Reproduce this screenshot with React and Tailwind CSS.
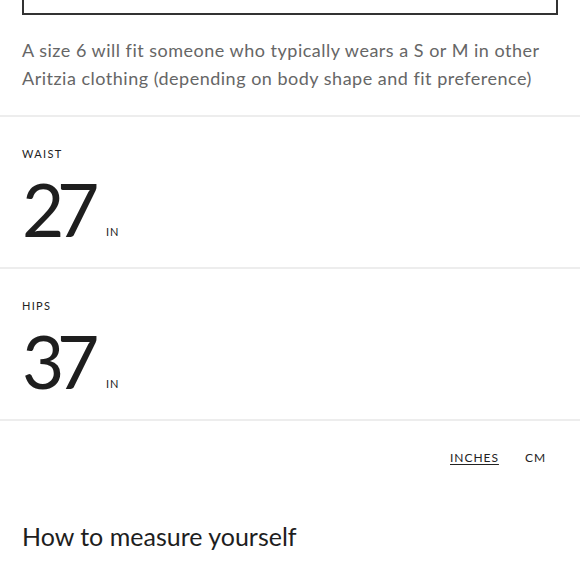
import React from 'react';

const Measurement = ({ label, value }) => (
  <div className="h-[152px] border-t-2 border-[#ededed] px-[22px] pt-[30px]">
    <div className="text-[11px] leading-[14px] tracking-[0.12em] text-[#222]">{label}</div>
    <div className="mt-[18px] flex items-end">
      <span className="text-[73px] leading-[60px] text-[#1e1e1e] tracking-[-0.1em]">{value}</span>
      <span className="ml-[14px] text-[11px] leading-[14px] tracking-[0.08em] text-[#222]">IN</span>
    </div>
  </div>
);

export default function App() {
  return (
    <div className="w-[580px] h-[580px] overflow-hidden bg-white font-['Lato',sans-serif]">
      <div className="px-[22px]">
        <div className="h-[15px] border-2 border-t-0 border-[#333]" />
        <p className="mt-[21px] pb-[23px] text-[18px] leading-[28px] tracking-[0.5px] text-[#666]">
          A size 6 will fit someone who typically wears a S or M in other Aritzia clothing (depending on body shape and fit preference)
        </p>
      </div>
      <Measurement label="WAIST" value="27" />
      <Measurement label="HIPS" value="37" />
      <div className="border-t-2 border-[#ededed] flex justify-end gap-[26px] pr-[34px] pt-[28px]">
        <button className="text-[12px] tracking-[0.08em] text-[#222] underline underline-offset-[2px]">INCHES</button>
        <button className="text-[12px] tracking-[0.08em] text-[#222]">CM</button>
      </div>
      <h2 className="mt-[54px] px-[22px] text-[25px] leading-[30px] text-[#1e1e1e]">How to measure yourself</h2>
    </div>
  );
}
